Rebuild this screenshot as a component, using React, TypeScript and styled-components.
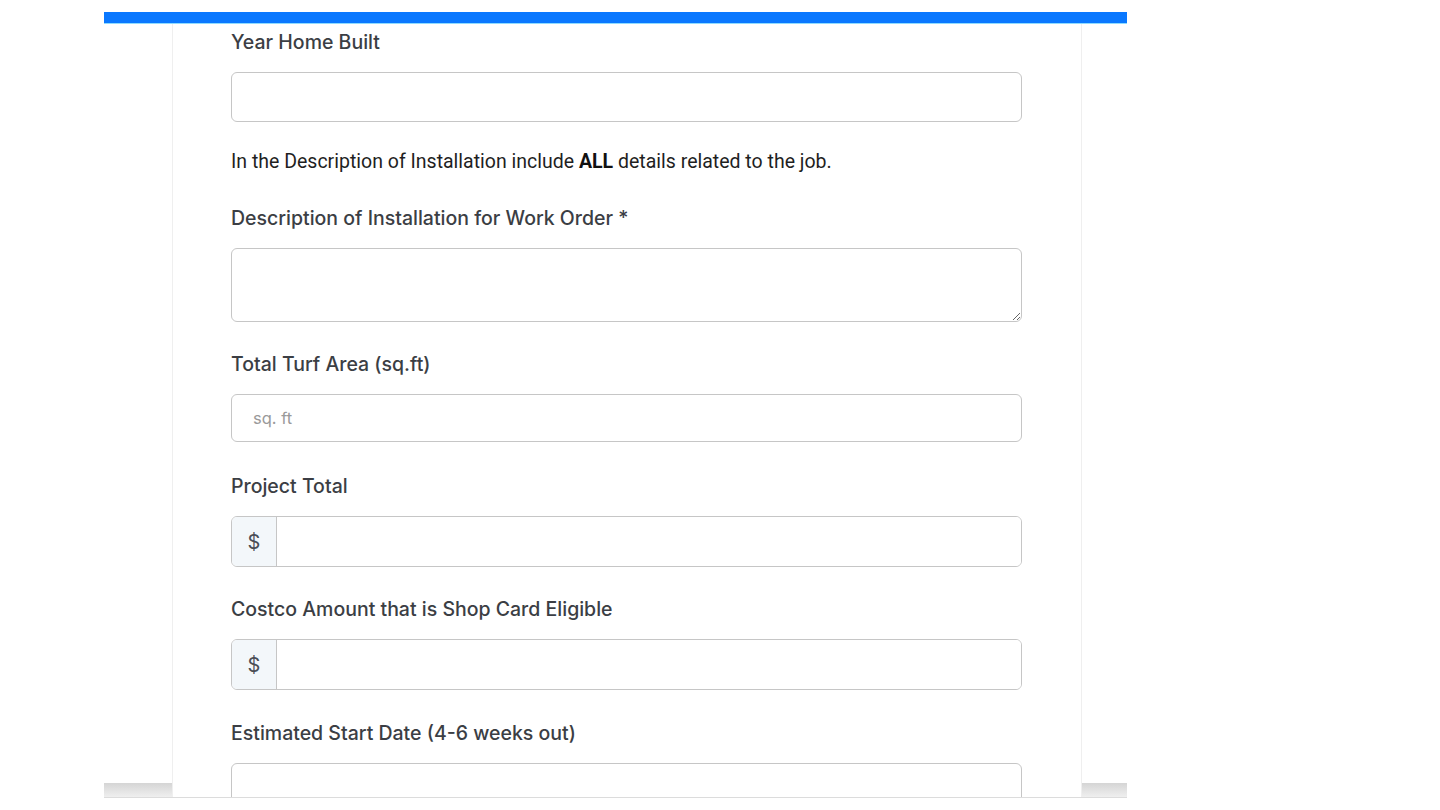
import React from "react";
import styled, { createGlobalStyle } from "styled-components";

const Global = createGlobalStyle`
  html, body { margin: 0; padding: 0; background: #ffffff; }
  body { font-family: "Inter", "Liberation Sans", sans-serif; }
  * { box-sizing: border-box; }
`;

const Page = styled.div`
  width: 1440px;
  height: 810px;
  padding: 12px 0 0 104px;
  overflow: hidden;
`;

const Frame = styled.div`
  width: 1023px;
  height: 786px;
  display: flex;
  flex-direction: column;
  border-bottom: 1px solid #dcdcdc;
  background: linear-gradient(
    to bottom,
    #ffffff calc(100% - 14px),
    #d5d5d5 calc(100% - 14px),
    #efefef 100%
  );
  overflow: hidden;
`;

const TopBar = styled.div`
  height: 12px;
  flex: 0 0 12px;
  background: #0a78ff;
  border-bottom: 1px solid #8fdcff;
`;

const Viewport = styled.div`
  flex: 1;
  display: flex;
  padding-left: 68px;
  overflow: hidden;
`;

const Card = styled.div`
  width: 910px;
  background: #ffffff;
  border-left: 1px solid #efefef;
  border-right: 1px solid #efefef;
  padding: 6px 59px 0 58px;
  display: flex;
  flex-direction: column;
`;

const Field = styled.div<{ $gap?: number }>`
  display: flex;
  flex-direction: column;
  margin-bottom: ${(p) => p.$gap ?? 30}px;
`;

const Label = styled.label`
  font-family: "Inter", "Liberation Sans", sans-serif;
  font-size: 19.5px;
  line-height: 24px;
  font-weight: 500;
  color: #3b3e44;
  margin-bottom: 18px;
  white-space: nowrap;
`;

const Note = styled.p`
  margin: 0 0 32px 0;
  font-family: "Roboto", "Liberation Sans", sans-serif;
  font-size: 19.5px;
  line-height: 24px;
  color: #1f1f1f;
  white-space: nowrap;
  b { font-weight: 700; color: #111; }
`;

const TextInput = styled.input<{ $h?: number }>`
  width: 791px;
  height: ${(p) => p.$h ?? 50}px;
  border: 1px solid #c6c6c6;
  border-radius: 6px;
  padding: 0 21px;
  font-family: "Inter", "Liberation Sans", sans-serif;
  font-size: 16.5px;
  color: #333;
  background: #fff;
  outline: none;
  &::placeholder { color: #9a9a9a; }
`;

const TextArea = styled.textarea`
  width: 791px;
  height: 74px;
  border: 1px solid #c6c6c6;
  border-radius: 6px;
  padding: 10px 21px;
  font-family: "Inter", "Liberation Sans", sans-serif;
  font-size: 16.5px;
  resize: vertical;
  outline: none;
  display: block;
`;

const Group = styled.div`
  width: 791px;
  height: 51px;
  display: flex;
  border: 1px solid #c6c6c6;
  border-radius: 6px;
  overflow: hidden;
`;

const Addon = styled.span`
  width: 45px;
  flex: 0 0 45px;
  display: flex;
  align-items: center;
  justify-content: center;
  background: #f3f7fa;
  border-right: 1px solid #c6c6c6;
  font-family: "Inter", "Liberation Sans", sans-serif;
  font-size: 20px;
  color: #4a4e55;
`;

const GroupInput = styled.input`
  flex: 1;
  border: none;
  outline: none;
  padding: 0 14px;
  font-family: "Inter", "Liberation Sans", sans-serif;
  font-size: 16.5px;
  background: #fff;
`;

export default function App() {
  return (
    <>
      <Global />
      <Page>
        <Frame>
          <TopBar />
          <Viewport>
            <Card>
              <Field $gap={28}>
                <Label>Year Home Built</Label>
                <TextInput type="text" />
              </Field>
              <Note>
                In the Description of Installation include <b>ALL</b> details related to the job.
              </Note>
              <Field>
                <Label>Description of Installation for Work Order *</Label>
                <TextArea />
              </Field>
              <Field $gap={32}>
                <Label>Total Turf Area (sq.ft)</Label>
                <TextInput type="text" placeholder="sq. ft" $h={48} />
              </Field>
              <Field>
                <Label>Project Total</Label>
                <Group>
                  <Addon>$</Addon>
                  <GroupInput type="text" />
                </Group>
              </Field>
              <Field $gap={31}>
                <Label>Costco Amount that is Shop Card Eligible</Label>
                <Group>
                  <Addon>$</Addon>
                  <GroupInput type="text" />
                </Group>
              </Field>
              <Field>
                <Label>Estimated Start Date (4-6 weeks out)</Label>
                <TextInput type="text" />
              </Field>
            </Card>
          </Viewport>
        </Frame>
      </Page>
    </>
  );
}
